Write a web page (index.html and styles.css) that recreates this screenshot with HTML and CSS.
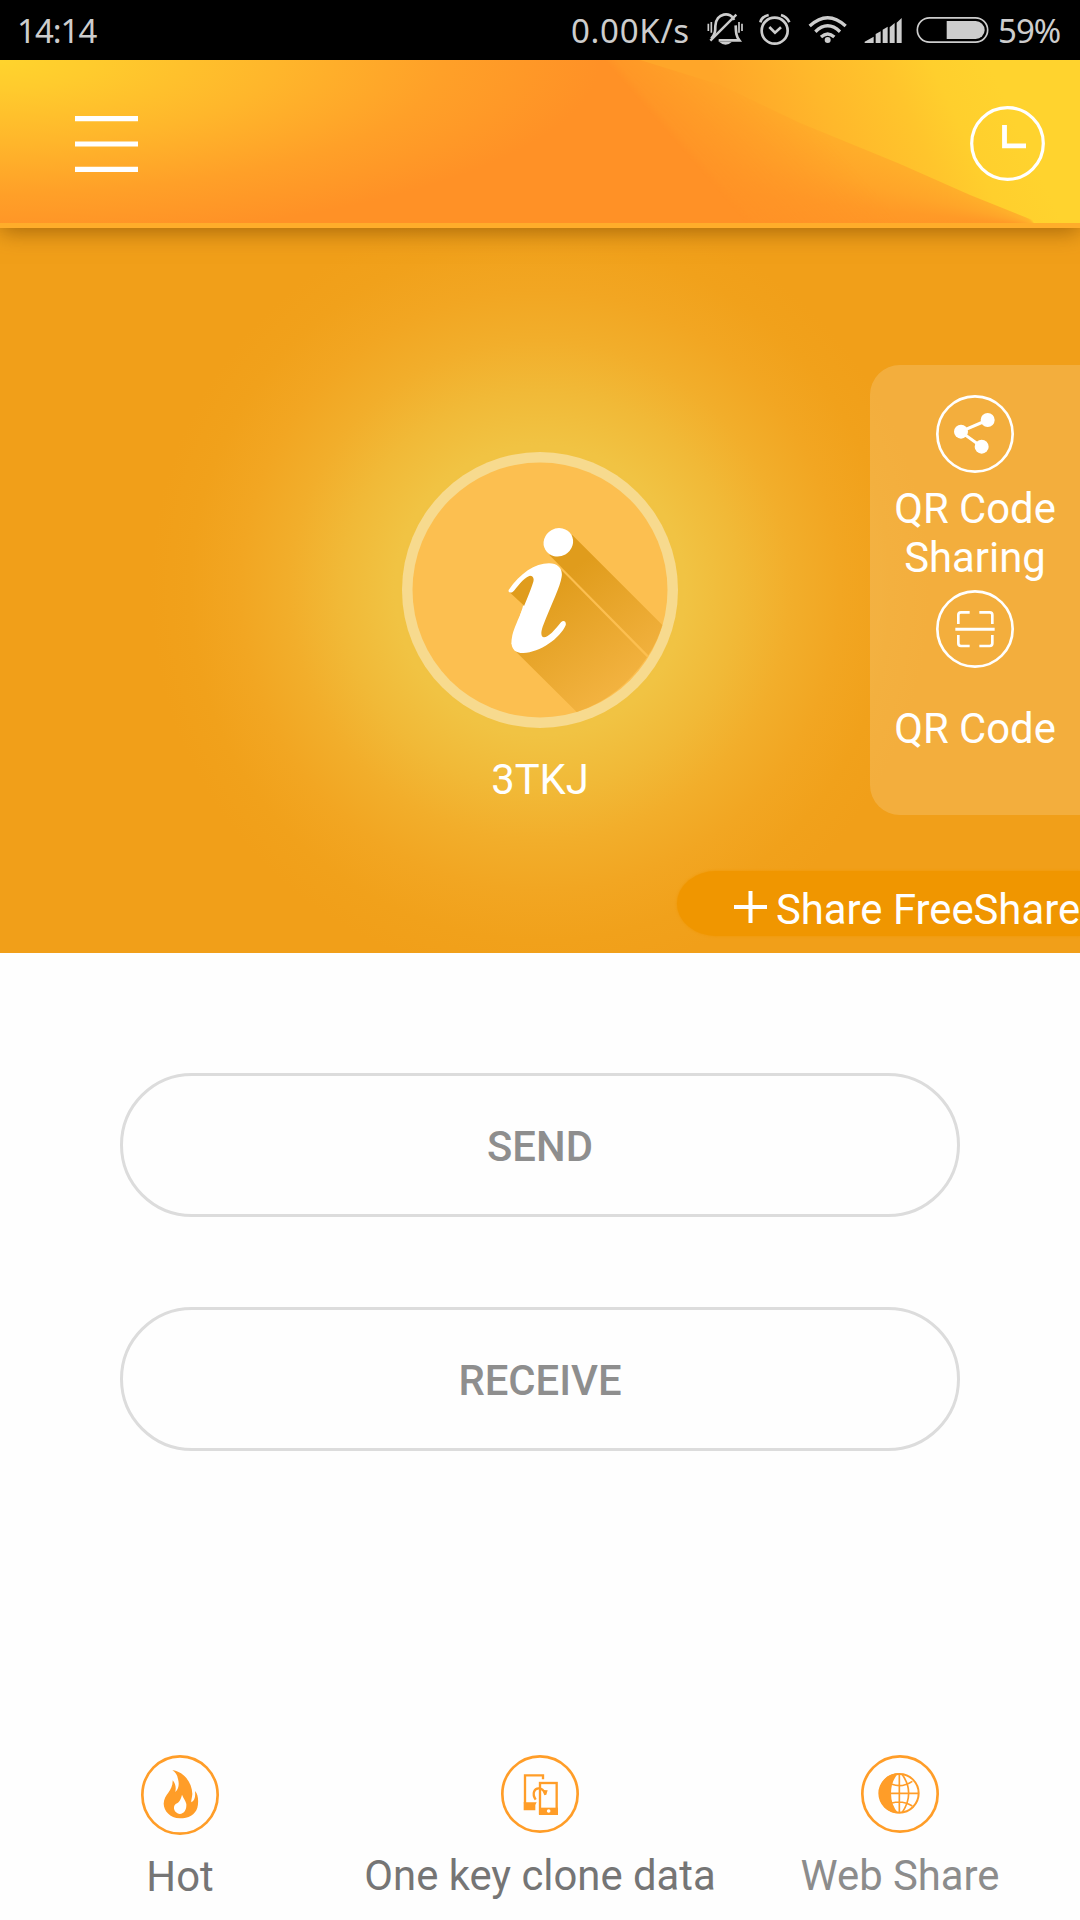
FILE: index.html
```
<!DOCTYPE html>
<html lang="en">
<head>
<meta charset="utf-8">
<title>FreeShare</title>
<link rel="stylesheet" href="styles.css">
</head>
<body>
<div class="status">
  <span class="time">14:14</span>
  <span class="speed">0.00K/s</span>
  <svg class="status-icons" width="290" height="60" viewBox="0 0 870 180" fill="none" stroke="#cdcdcd">
    <g stroke-width="8">
      <path d="M25 116C37 101 37 94 37 78C38 38 85 33 93 60M98 76C99 98 99 108 109 121H47" />
      <path d="M22 122L100 44" stroke-width="7"/>
      <path d="M49 126H86Q68 143 49 126Z" fill="#cdcdcd" stroke="none"/>
      <path d="M16 71V93M25 66V98M108 66V98M117 71V93" stroke-width="5"/>
    </g>
    <circle cx="215" cy="92" r="39" stroke-width="8"/>
    <path d="M199 81L216 98L234 82" stroke-width="8"/>
    <path d="M172 67Q176 50 197 45M234 45Q252 50 259 67" stroke-width="8"/>
    <path d="M320 78Q374 28 428 78M337 95Q374 60 411 95M354 111Q374 93 394 111" stroke-width="10"/>
    <circle cx="374" cy="120" r="9" fill="#cdcdcd" stroke="none"/>
    <path d="M485 129V125L512 110V129ZM518 129V102L533 94V129ZM539 129V89L554 80V129ZM560 129V82L575 69V129ZM581 129V68L596 54V129Z" fill="#cdcdcd" stroke="none"/>
    <rect x="643" y="53.500" width="211" height="73" rx="36.500" stroke-width="5"/>
    <path d="M731 63H818A27 27 0 0 1 818 117H731Z" fill="#cdcdcd" stroke="none"/>
  </svg>
  <span class="battery">59%</span>
</div>

<header class="topbar">
  <svg class="menu" width="63" height="56" viewBox="0 0 63 56"><path d="M0 2.700H63M0 28H63M0 53.300H63" stroke="#fff" stroke-width="5.200"/></svg>
  <svg class="history" width="75" height="75" viewBox="0 0 75 75" fill="none" stroke="#fff"><circle cx="37.500" cy="37.500" r="35.800" stroke-width="3.200"/><path d="M34.500 19V39.800H56" stroke-width="4.800"/></svg>
</header>

<section class="hero">
  <div class="profile">
    <svg width="276" height="276" viewBox="0 0 276 276">
      <defs>
        <linearGradient id="shade" gradientUnits="userSpaceOnUse" x1="530" y1="450" x2="740" y2="750">
          <stop offset="0" stop-color="#e09c1c"/><stop offset="1" stop-color="#f2b23f"/>
        </linearGradient>
      </defs>
      <circle cx="138" cy="138" r="138" fill="#f7da8e"/>
      <circle cx="138" cy="138" r="127.500" fill="#fcbf50"/>
      <g transform="translate(-22 -22) scale(.33333)">
        <path d="M577 315L847 585Q832 635 805 676L508 375ZM540 416L801 682Q718 805 590 846L405 662L430 525L388 486L455 430Z" fill="url(#shade)"/>
        <path d="M405 662L395 640L430 525L450 560Z" fill="#fff"/>
        <ellipse cx="535" cy="337" rx="45" ry="42" transform="rotate(-30 535 337)" fill="#fff"/>
        <path d="M386 480C420 430 465 400 507 400C535 400 549 418 545 440C541 470 515 520 488 590C481 612 484 621 492 622C505 622 525 600 543 577C551 569 560 575 557 586C540 625 480 668 430 669C400 669 390 650 396 622C402 585 440 520 460 455C463 443 458 437 450 437C435 440 420 460 402 482C394 491 384 488 386 480Z" fill="#fff"/>
      </g>
    </svg>
    <span class="name">3TKJ</span>
  </div>
  <aside class="qr-panel">
    <svg width="78" height="78" viewBox="0 0 234 234" fill="none" stroke="#fff"><circle cx="117" cy="117" r="113" stroke-width="8"/><path d="M155 75L74 110L137 155" stroke-width="9"/><g fill="#fff" stroke="none"><circle cx="155" cy="75" r="21"/><circle cx="75" cy="110" r="21"/><circle cx="137" cy="155" r="21"/></g></svg>
    <span class="qr-share">QR Code Sharing</span>
    <svg width="78" height="78" viewBox="0 0 234 234" fill="none" stroke="#fff"><circle cx="117" cy="117" r="113" stroke-width="8"/><path d="M67 102V75Q67 67 75 67H101M130 67H161Q169 67 169 75V102M67 135V160Q67 168 75 168H101M130 168H161Q169 168 169 160V135" stroke-width="8"/><path d="M58 118H176" stroke-width="9"/></svg>
    <span class="qr-scan">QR Code</span>
  </aside>
  <div class="share-app">
    <svg width="33" height="32" viewBox="0 0 33 32"><path d="M0 16H33M16.500 0V32" stroke="#fff" stroke-width="4"/></svg>
    <span>Share FreeShare</span>
  </div>
</section>

<main class="actions">
  <button class="pill">SEND</button>
  <button class="pill">RECEIVE</button>
</main>

<nav class="tabs">
  <div class="tab hot">
    <svg width="78" height="80" viewBox="0 0 234 240"><ellipse cx="117" cy="120" rx="113" ry="116" fill="none" stroke="#ff9d28" stroke-width="8"/><path d="M94 46C127 49 153 81 154 117C153 130 150 135 151 142C161 137 164 126 162 108C173 119 173 143 169 158C163 179 142 190 117 190C86 188 69 168 68 146C69 116 96 109 95 76C103 85 106 97 103 111C114 101 115 86 111 72C109 60 103 51 94 46Z" fill="#ff9d28"/><path d="M123 119C119 137 112 143 104 147C93 157 101 175 116 177C130 176 137 164 136 147C134 137 127 130 123 119Z" fill="#fff"/></svg>
    <span>Hot</span>
  </div>
  <div class="tab">
    <svg width="78" height="78" viewBox="0 0 234 234"><circle cx="117" cy="117" r="113" fill="none" stroke="#ff9d28" stroke-width="8"/><path d="M72 145V61H126V73" fill="none" stroke="#ff9d28" stroke-width="7"/><path d="M68 142H107L103 150V166H68Z" fill="#ff9d28"/><path d="M104 134C92 116 100 99 114 100Q126 101 132 114" fill="none" stroke="#ff9d28" stroke-width="7"/><path d="M124 105L140 106L136 119L130 121Z" fill="#ff9d28"/><rect x="117" y="84" width="50" height="91" fill="none" stroke="#ff9d28" stroke-width="7"/><path d="M114 158H171V180H114Z" fill="#ff9d28"/><circle cx="143" cy="168" r="5.500" fill="#fff"/></svg>
    <span>One key clone data</span>
  </div>
  <div class="tab web">
    <svg width="78" height="78" viewBox="0 0 234 234"><circle cx="117" cy="117" r="113" fill="none" stroke="#ff9d28" stroke-width="8"/><g fill="none" stroke="#ff9d28" stroke-width="5"><circle cx="115" cy="115" r="58" stroke-width="6"/><path d="M115 57V173M90 115H173M93 88Q124 99 154 79M93 144Q124 135 154 153M123 58Q143 85 143 115Q143 145 123 173"/></g><path d="M112 55A60 60 0 0 0 112 175Q90 152 90 115Q90 78 112 55Z" fill="#ff9d28"/></svg>
    <span>Web Share</span>
  </div>
</nav>
</body>
</html>
```
FILE: styles.css
```
* { box-sizing: border-box; }

body {
  margin: 0;
  width: 1080px;
  height: 1920px;
  overflow: hidden;
  display: flex;
  flex-direction: column;
  background: #fefefe;
  font: 41.8px/49px Roboto, "Liberation Sans", sans-serif;
  color: #fff;
}

svg { display: block; flex: none; }

.status {
  height: 60px;
  display: flex;
  background: #000;
  color: #cdcdcd;
  font: 33px/62px "Noto Sans", sans-serif;
  letter-spacing: -1px;
  white-space: nowrap;
}
.time { width: 571px; padding-left: 17px; }
.speed { width: 132px; letter-spacing: .7px; }
.battery { padding-left: 5px; }

.topbar {
  height: 168px;
  display: flex;
  justify-content: space-between;
  padding: 46px 35px 0 75px;
  position: relative;
  z-index: 1;
  border-bottom: 5px solid #ffad2a;
  background: radial-gradient(ellipse 600px 180px at 0 0, #ffd42d 0%, #ffcb2d 16%, #ffb62b 46%, #ffa028 74%, #ff9126 100%);
  box-shadow: 0 3px 22px rgba(120, 70, 0, .65);
  clip-path: inset(0 0 -40px 0);
}
.topbar::before,
.topbar::after {
  content: "";
  position: absolute;
  inset: 0;
}
.topbar::before {
  background: conic-gradient(at 1036px 166px, #ffd32e 0deg 200deg, #ff9426 268deg, #ff9a27 276deg, #ffa529 284deg, #ffae2a 294deg, #ffb42b 310deg, #ffd32e 332deg);
  -webkit-mask-image: linear-gradient(49deg, transparent 61%, rgba(0, 0, 0, .25) 62%, #000 74%);
  mask-image: linear-gradient(49deg, transparent 61%, rgba(0, 0, 0, .25) 62%, #000 74%);
}
.topbar::after {
  background: linear-gradient(65deg, #ffa629 68%, #ffb82b 76%, #ffc52c 83%, #ffcf2d 87%, #ffd32e 92%);
  clip-path: polygon(640px 0, 1080px 0, 1080px 163px, 1040px 163px, 970px 135px, 900px 104px, 800px 63px, 720px 25px);
  -webkit-mask-image: linear-gradient(26deg, transparent 58%, #000 66%);
  mask-image: linear-gradient(27deg, transparent 56%, #000 61%);
}
.menu, .history { position: relative; z-index: 1; }
.menu { margin-top: 10px; }

.hero {
  height: 725px;
  display: grid;
  grid-template-columns: 210px 1fr 210px;
  grid-template-rows: 450px 65px;
  row-gap: 56px;
  padding-top: 137px;
  overflow: hidden;
  background: radial-gradient(circle at 540px 362px, #f1c545 0, #f1c343 145px, #f1b937 200px, #f2ae2b 250px, #f2a622 300px, #f1a11b 350px, #f19f19 390px);
}
.profile {
  grid-column: 2;
  display: flex;
  flex-direction: column;
  align-items: center;
  padding-top: 87px;
  gap: 27px;
}
.qr-panel {
  display: flex;
  flex-direction: column;
  align-items: center;
  padding: 30px 0 0;
  border-radius: 30px 0 0 30px;
  background: rgba(255, 255, 255, .16);
  text-align: center;
}
.qr-share { width: 180px; margin: 11px 0 8px; }
.qr-scan { margin-top: 36px; }
.share-app {
  grid-column: 1 / -1;
  justify-self: end;
  width: 403px;
  display: flex;
  padding: 14px 0 0 57px;
  gap: 9px;
  border-radius: 40px 0 0 40px / 33px 0 0 33px;
  background: #f09600;
  box-shadow: 0 0 3px #f09600;
  white-space: nowrap;
}
.share-app svg { margin-top: 6px; }

.actions {
  height: 802px;
  padding: 120px 120px 0;
  display: flex;
  flex-direction: column;
  gap: 90px;
}
.pill {
  height: 144px;
  padding: 3px 0 0;
  border: 3px solid #dcdcdc;
  border-radius: 72px;
  background: none;
  color: #8e8e8e;
  font: 500 41.8px/49px Roboto, "Liberation Sans", sans-serif;
}

.tabs {
  display: grid;
  grid-template-columns: repeat(3, 360px);
  color: #757575;
}
.tab {
  display: flex;
  flex-direction: column;
  align-items: center;
  gap: 18px;
  white-space: nowrap;
}
.hot { gap: 17px; }
.web { color: #8c8c8c; }
```
